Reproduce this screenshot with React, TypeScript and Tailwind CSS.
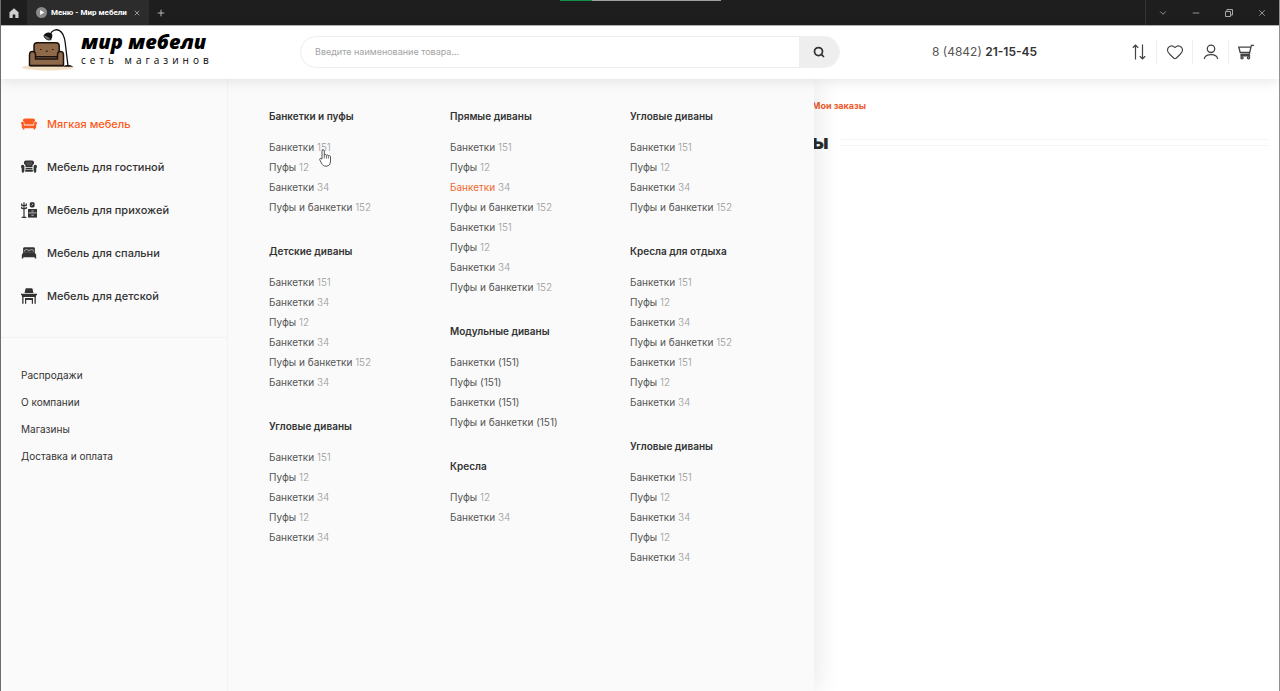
import { useState } from 'react';
import { ChevronDown, Heart, Minus, Plus, Search, X } from 'lucide-react';

type Item = { name: string; count: string; active?: boolean };
type Group = { title: string; items: Item[] };

const bench = (count = '151'): Item => ({ name: 'Банкетки', count });
const pouf = (count = '12'): Item => ({ name: 'Пуфы', count });
const both = (count = '152'): Item => ({ name: 'Пуфы и банкетки', count });

const columns: Group[][] = [
  [
    { title: 'Банкетки и пуфы', items: [bench(), pouf(), bench('34'), both()] },
    { title: 'Детские диваны', items: [bench(), bench('34'), pouf(), bench('34'), both(), bench('34')] },
    { title: 'Угловые диваны', items: [bench(), pouf(), bench('34'), pouf(), bench('34')] },
  ],
  [
    {
      title: 'Прямые диваны',
      items: [bench(), pouf(), { ...bench('34'), active: true }, both(), bench(), pouf(), bench('34'), both()],
    },
    { title: 'Модульные диваны', items: [bench('(151)'), pouf('(151)'), bench('(151)'), both('(151)')] },
    { title: 'Кресла', items: [pouf(), bench('34')] },
  ],
  [
    { title: 'Угловые диваны', items: [bench(), pouf(), bench('34'), both()] },
    { title: 'Кресла для отдыха', items: [bench(), pouf(), bench('34'), both(), bench(), pouf(), bench('34')] },
    { title: 'Угловые диваны', items: [bench(), pouf(), bench('34'), pouf(), bench('34')] },
  ],
];

const categories = [
  { label: 'Мягкая мебель', icon: SofaIcon },
  { label: 'Мебель для гостиной', icon: ArmchairIcon },
  { label: 'Мебель для прихожей', icon: HallIcon },
  { label: 'Мебель для спальни', icon: BedIcon },
  { label: 'Мебель для детской', icon: DeskIcon },
];

const links = ['Распродажи', 'О компании', 'Магазины', 'Доставка и оплата'];

function SofaIcon() {
  return (
    <svg viewBox="0 0 16 16" className="h-4 w-4 shrink-0" fill="currentColor">
      <path d="M2 5.200V4.400C2 3.200 2.800 2.500 4 2.500h8c1.200 0 2 .7 2 1.900v.8c-1 .2-1.400.9-1.400 1.800v1.600H3.400V7C3.400 6.100 3 5.400 2 5.200Z" />
      <path d="M0 7.200C0 6.400.6 5.800 1.400 5.800s1.500.6 1.500 1.400v2.200h10.200V7.200c0-.8.7-1.400 1.500-1.400S16 6.400 16 7.200c0 .6-.3 1-.8 1.300v3c0 .4-.3.700-.7.700h-.3v1.300h-1.500v-1.300H3.300v1.300H1.800v-1.300h-.3c-.4 0-.7-.3-.7-.7v-3C.3 8.200 0 7.800 0 7.200Z" />
    </svg>
  );
}

function ArmchairIcon() {
  return (
    <svg viewBox="0 0 16 16" className="h-4 w-4 shrink-0" fill="currentColor">
      <path d="M3 5V3.500C3 2.300 3.800 1.500 5 1.500h6c1.200 0 2 .8 2 2V5c-1 .4-1.500 1.100-1.500 2v1.300h-7V7C4.500 6.100 4 5.400 3 5Z" />
      <path d="M0 7.500C0 6.500.800 5.800 1.700 5.800s1.700.7 1.700 1.700V12c0 .5-.3.800-.7.800v1H1.200v-1c-.3 0-.5-.3-.5-.6V9C.3 8.700 0 8.200 0 7.500ZM16 7.500c0-1-.8-1.700-1.700-1.700s-1.700.7-1.700 1.700V12c0 .5.300.8.700.8v1h1.500v-1c.3 0 .5-.3.500-.6V9c.4-.3.700-.8.700-1.500Z" />
      <path d="M4.600 8.900h6.800v1.300H4.600zM4.200 10.800h7.600v2H4.200z" />
      <path d="M5.500 4h.9M7.600 4h.9M9.700 4h.9M6.500 5.800h.9M8.700 5.800h.9" stroke="#fafafa" strokeWidth=".6" />
    </svg>
  );
}

function HallIcon() {
  return (
    <svg viewBox="0 0 16 16" className="h-4 w-4 shrink-0" fill="currentColor">
      <path
        d="M3 .3v15M.7 1.500v1.700L3 3.800l2.300-.6V1.500M.7 4.800v1.400L3 6.800l2.300-.6V4.800M.7 15.300h4.600"
        fill="none"
        stroke="currentColor"
        strokeWidth="1.200"
      />
      <rect x="8.800" y=".3" width="4.800" height="5.200" rx="1.400" />
      <path d="M10.500 3.500 12 2" stroke="#fafafa" strokeWidth=".7" />
      <path d="M7 7h9v8.600H7z" />
      <path d="M7.500 10.900h8M10.300 9h2.400M10.300 13.200h2.400" stroke="#fafafa" strokeWidth=".7" />
    </svg>
  );
}

function BedIcon() {
  return (
    <svg viewBox="0 0 16 16" className="h-4 w-4 shrink-0" fill="currentColor">
      <path d="M3.500 2.300h9c.8 0 1.400.6 1.400 1.400v3.700H2.100V3.700c0-.8.6-1.400 1.400-1.400Z" />
      <path d="M3.600 6.500V5.400c0-.4.300-.6.600-.6h2.600c.3 0 .6.200.6.600v.8M8.600 6.200v-.8c0-.4.300-.6.600-.6h2.600c.3 0 .6.200.6.600v1.100" fill="none" stroke="#fafafa" strokeWidth=".6" />
      <path d="M2.300 7.200h11.400l1.500 2.800v3.500h-1.500v-1.300H2.300v1.300H.8V10Z" />
    </svg>
  );
}

function DeskIcon() {
  return (
    <svg viewBox="0 0 16 16" className="h-4 w-4 shrink-0" fill="currentColor">
      <path d="M5.200.3h5.600c.4 0 .700.200.8.600L12.400 5H3.600L4.400.9c.1-.4.400-.6.800-.6Z" />
      <path d="M0 5.800h16v1.500H0zM1 7.300h14v1.700H1z" />
      <path d="M1.200 9h1.300v6.700H1.200zM13.500 9h1.300v6.700h-1.300zM4 10h8v1.900H4zM4 11.900h1.200v3.800H4zM10.800 11.900H12v3.800h-1.200z" />
    </svg>
  );
}

function LogoIcon() {
  return (
    <svg viewBox="0 0 54 44" className="h-11 w-[54px] shrink-0">
      <ellipse cx="27" cy="39.500" rx="26" ry="3" fill="#f3dfc2" />
      <g stroke="#1c130c" strokeWidth="1.500" strokeLinejoin="round">
        <path d="M13 29V18c0-2 1.200-3.200 3-3.200h19c2 0 3.200 1.200 3.200 3.200v11Z" fill="#8f6a4a" />
        <path d="M8.500 37.500V27c0-2.200 1.200-3.600 3-3.600s3 1.400 3 3.400v2h22v-2c0-2 1.200-3.400 3-3.400s3 1.400 3 3.600v10.500Z" fill="#8f6a4a" />
        <path d="M14.500 28.800v2.200h22v-2.200M9 37.800h33.500" fill="none" />
      </g>
      <path d="M19.500 21.500h.5M25.300 23.200h.8M31.500 21.500h.5" stroke="#1c130c" strokeWidth="1.200" strokeLinecap="round" />
      <path d="M29.500 6C31 2.500 35 .8 38 2.300c4 2 5.600 6.500 6.200 12.500L47 38" fill="none" stroke="#111" strokeWidth="1.300" />
      <path d="M23 7c1.500-3 5.500-3.500 8-1 .6 1.500.3 3.500-.8 5.500Z" fill="#111" />
      <path d="M23 7.200c2.500.2 5.300 1.700 7 4.300-2.500 1.500-7-.8-7-4.300Z" fill="#77736e" stroke="#111" strokeWidth=".9" />
      <path d="M42.500 38.800c1-2.300 8-2.300 9.500 0Z" fill="#111" />
    </svg>
  );
}

function CompareIcon() {
  return (
    <svg viewBox="0 0 16 16" className="h-4 w-4" fill="none" stroke="currentColor" strokeWidth="1.200">
      <path d="M4.500 15.500V1.200M1.800 3.800l2.700-2.600 2.700 2.600M11.500.5v14.300M8.800 12.200l2.700 2.600 2.700-2.600" />
    </svg>
  );
}

function UserIcon() {
  return (
    <svg viewBox="0 0 16 16" className="h-4 w-4" fill="none" stroke="currentColor" strokeWidth="1.300">
      <circle cx="8" cy="4.800" r="3.700" />
      <path d="M1.300 15c.5-3 3.200-4.300 6.700-4.300s6.200 1.300 6.700 4.300" />
    </svg>
  );
}

function CartIcon() {
  return (
    <svg viewBox="0 0 16 16" className="h-4 w-4" fill="none" stroke="currentColor" strokeWidth="1.300">
      <path d="M16 1.300h-2.600L11.200 10.500H2.500M12.700 3.200H.800l1.400 5.300h9.300M3 10.500v1.300h9.300" />
      <circle cx="4" cy="13.700" r="1.100" />
      <circle cx="10.500" cy="13.700" r="1.100" />
    </svg>
  );
}

function HandCursor() {
  return (
    <svg viewBox="0 0 12 18" className="pointer-events-none absolute top-[149px] left-[318px] z-40 h-[18px] w-3">
      <path
        d="M3 10.200V2c0-1.800 2.300-1.800 2.300 0v4.200c.3-1 1.900-1 2.100.2.500-.8 1.900-.6 2 .5.700-.6 2.100-.3 2.100 1V12c0 3-1.200 5.200-4.500 5.200-2.500 0-3.500-1-4.500-3L.8 10.900c-.6-1.200.7-2 1.500-1.200Z"
        fill="#fff"
        stroke="#444"
        strokeWidth=".9"
      />
      <path d="M5.300 6v3.500M7.400 6.600v2.900M9.400 7.200v2.300" stroke="#444" strokeWidth=".8" />
    </svg>
  );
}

function TitleBar() {
  return (
    <div className="relative flex h-[26px] items-stretch border-b border-[#b5b5b5] bg-[#1e1e1e] text-[#cfcfcf]">
      <button aria-label="Домой" className="flex w-[26px] items-center justify-center">
        <svg viewBox="0 0 10 10" className="h-[10px] w-[10px]" fill="currentColor">
          <path d="M5 .3.500 4.200V10h3.200V6.500h2.600V10h3.200V4.200Z" />
        </svg>
      </button>
      <div className="flex w-[122px] items-center bg-[#2c2c2c] pl-[9px]">
        <svg viewBox="0 0 12 12" className="mr-1 h-[11px] w-[11px] shrink-0">
          <circle cx="6" cy="6" r="6" fill="#8a8a8a" />
          <path d="M4.500 3.200v5.600L9 6Z" fill="#fff" />
        </svg>
        <span className="font-['Roboto'] text-[8px] font-bold whitespace-nowrap text-white">Меню - Мир мебели</span>
        <button aria-label="Закрыть вкладку" className="mr-2 ml-auto">
          <X className="h-2 w-2" />
        </button>
      </div>
      <button aria-label="Новая вкладка" className="flex w-6 items-center justify-center">
        <Plus className="h-[10px] w-[10px]" />
      </button>
      <div className="ml-auto flex items-stretch border-l border-[#333] text-[#a8a8a8]">
        <button aria-label="Список" className="flex w-[33px] items-center justify-center">
          <ChevronDown className="h-[10px] w-[10px]" />
        </button>
        <button aria-label="Свернуть" className="flex w-[33px] items-center justify-center">
          <Minus className="h-[10px] w-[10px]" />
        </button>
        <button aria-label="Развернуть" className="flex w-[33px] items-center justify-center">
          <svg viewBox="0 0 8 8" className="h-2 w-2" fill="none" stroke="currentColor">
            <path d="M.5 2.500h5v5h-5zM2 2.500v-2h5.500V6h-2" />
          </svg>
        </button>
        <button aria-label="Закрыть" className="flex w-[34px] items-center justify-center">
          <X className="h-[10px] w-[10px]" />
        </button>
      </div>
      <div className="absolute top-0 left-[559px] flex h-px w-[161px]">
        <div className="w-1/5 bg-[#12904a]" />
        <div className="flex-1 bg-[#a0a0a0]" />
      </div>
    </div>
  );
}

function Header() {
  return (
    <header className="relative z-30 flex h-[53px] items-center bg-white pr-4 pb-[2px] pl-5 shadow-[0_2px_12px_rgba(0,0,0,0.1)]">
      <a href="#" className="flex w-[279px] items-center pb-1">
        <LogoIcon />
        <span className="ml-[6px] flex flex-col pb-1 font-['Open_Sans'] text-black">
          <span className="text-xl leading-6 font-extrabold whitespace-nowrap italic">мир мебели</span>
          <span className="text-[10px] leading-3 tracking-[4px] whitespace-nowrap">сеть магазинов</span>
        </span>
      </a>
      <form
        className="flex h-8 w-[540px] overflow-hidden rounded-full border border-[#eee]"
        onSubmit={(e) => e.preventDefault()}
      >
        <input
          type="text"
          aria-label="Поиск товара"
          placeholder="Введите наименование товара..."
          className="min-w-0 flex-1 px-[14px] text-[9px] outline-none placeholder:text-[#a3a3a3]"
        />
        <button aria-label="Найти" className="flex w-10 items-center justify-center bg-[#eee] text-[#333]">
          <Search className="h-3 w-3" strokeWidth={3.5} />
        </button>
      </form>
      <a href="tel:84842211545" className="ml-[92px] text-xs whitespace-nowrap text-[#555]">
        8 (4842) <b className="font-semibold text-[#333]">21-15-45</b>
      </a>
      <div className="ml-auto flex divide-x divide-[#eee] text-[#444]">
        <button aria-label="Сравнение" className="flex h-6 w-9 items-center justify-center">
          <CompareIcon />
        </button>
        <button aria-label="Избранное" className="flex h-6 w-9 items-center justify-center">
          <Heart className="h-[18px] w-[18px]" strokeWidth={1.5} />
        </button>
        <button aria-label="Профиль" className="flex h-6 w-9 items-center justify-center">
          <UserIcon />
        </button>
        <button aria-label="Корзина" className="flex h-6 w-[34px] items-center justify-center">
          <CartIcon />
        </button>
      </div>
    </header>
  );
}

export default function App() {
  const [category, setCategory] = useState(0);

  return (
    <div className="relative flex min-h-screen flex-col overflow-hidden border-r border-l border-r-[#8a948c] border-l-[#6e6e6e] bg-white font-['Inter',sans-serif] text-[#333]">
      <TitleBar />
      <Header />

      <div className="flex flex-1">
        {/* Sidebar */}
        <aside className="relative z-20 w-[227px] shrink-0 border-r border-[#f3f3f3] bg-[#fafafa]">
          <nav className="flex flex-col gap-[23px] border-b border-[#f1f1f1] px-5 pt-[35px] pb-[31px]">
            {categories.map(({ label, icon: Icon }, i) => (
              <button
                key={label}
                onClick={() => setCategory(i)}
                className={`flex h-5 cursor-pointer items-center gap-[10px] text-left text-[11px] font-medium whitespace-nowrap ${
                  i === category ? 'text-[#fb5a20]' : 'text-[#333]'
                }`}
              >
                <Icon />
                {label}
              </button>
            ))}
          </nav>
          <ul className="flex flex-col gap-[7px] px-5 pt-[27px] text-[10px] leading-5">
            {links.map((label) => (
              <li key={label}>
                <a href="#">{label}</a>
              </li>
            ))}
          </ul>
        </aside>

        {/* Mega menu */}
        <section className="relative z-10 grid w-[586px] shrink-0 grid-cols-[181px_180px_1fr] bg-[#fafafa] pt-[27px] pl-[41px] shadow-[4px_0_24px_rgba(0,0,0,0.09)]">
          {columns.map((groups, i) => (
            <div key={i} className="flex flex-col gap-6">
              {groups.map((group, j) => (
                <div key={j}>
                  <h3 className="mb-[11px] text-[10px] leading-5 font-semibold">{group.title}</h3>
                  <ul className="text-[10px] leading-5 text-[#555]">
                    {group.items.map((item, k) => (
                      <li key={k}>
                        <a href="#" className={item.active ? 'text-[#f0682f]' : ''}>
                          {item.name}{' '}
                          <span className={item.count.startsWith('(') ? '' : 'font-light text-[#999]'}>{item.count}</span>
                        </a>
                      </li>
                    ))}
                  </ul>
                </div>
              ))}
            </div>
          ))}
        </section>

        {/* Page content */}
        <main className="-ml-[2px] flex-1 pt-[17px] pr-3">
          <a href="#" className="block text-[9px] leading-5 font-bold text-[#ee5a2a]">
            Мои заказы
          </a>
          <div className="mt-[14px] flex items-center gap-3">
            <h1 className="text-xl leading-6 font-extrabold text-[#2b2b2b]">ы</h1>
            <div className="h-[7px] flex-1 border-y border-[#f3f3f3]" />
          </div>
        </main>
      </div>

      <HandCursor />
    </div>
  );
}
